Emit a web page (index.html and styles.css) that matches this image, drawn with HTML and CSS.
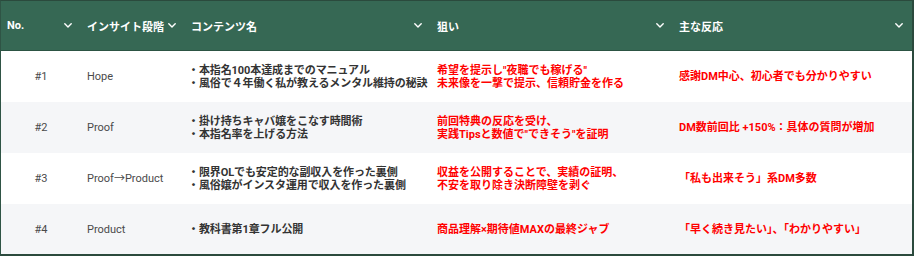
FILE: index.html
```html
<!DOCTYPE html>
<html lang="ja">
<head>
<meta charset="utf-8">
<link rel="stylesheet" href="styles.css">
</head>
<body>
<div class="table">
  <div class="row head">
    <div class="cell hcell"><span>No.</span><svg class="chev" viewBox="0 0 8 5" width="8" height="5"><polyline points="0.8,0.8 4,4 7.2,0.8"/></svg></div>
    <div class="cell hcell"><span>インサイト段階</span><svg class="chev" viewBox="0 0 8 5" width="8" height="5"><polyline points="0.8,0.8 4,4 7.2,0.8"/></svg></div>
    <div class="cell hcell"><span>コンテンツ名</span><svg class="chev" viewBox="0 0 8 5" width="8" height="5"><polyline points="0.8,0.8 4,4 7.2,0.8"/></svg></div>
    <div class="cell hcell"><span>狙い</span><svg class="chev" viewBox="0 0 8 5" width="8" height="5"><polyline points="0.8,0.8 4,4 7.2,0.8"/></svg></div>
    <div class="cell hcell"><span>主な反応</span><svg class="chev" viewBox="0 0 8 5" width="8" height="5"><polyline points="0.8,0.8 4,4 7.2,0.8"/></svg></div>
  </div>
  <div class="row body">
    <div class="cell num">#1</div>
    <div class="cell stage">Hope</div>
    <div class="cell content">・本指名100本達成までのマニュアル<br>・風俗で４年働く私が教えるメンタル維持の秘訣</div>
    <div class="cell red">希望を提示し"夜職でも稼げる"<br>未来像を一撃で提示、信頼貯金を作る</div>
    <div class="cell red">感謝DM中心、初心者でも分かりやすい</div>
  </div>
  <div class="row body alt">
    <div class="cell num">#2</div>
    <div class="cell stage">Proof</div>
    <div class="cell content">・掛け持ちキャバ嬢をこなす時間術<br>・本指名率を上げる方法</div>
    <div class="cell red">前回特典の反応を受け、<br>実践Tipsと数値で"できそう"を証明</div>
    <div class="cell red">DM数前回比 +150%：具体の質問が増加</div>
  </div>
  <div class="row body">
    <div class="cell num">#3</div>
    <div class="cell stage">Proof→Product</div>
    <div class="cell content">・限界OLでも安定的な副収入を作った裏側<br>・風俗嬢がインスタ運用で収入を作った裏側</div>
    <div class="cell red">収益を公開することで、実績の証明、<br>不安を取り除き決断障壁を剥ぐ</div>
    <div class="cell red">「私も出来そう」系DM多数</div>
  </div>
  <div class="row body alt last">
    <div class="cell num">#4</div>
    <div class="cell stage">Product</div>
    <div class="cell content">・教科書第1章フル公開</div>
    <div class="cell red">商品理解×期待値MAXの最終ジャブ</div>
    <div class="cell red">「早く続き見たい」、「わかりやすい」</div>
  </div>
</div>
</body>
</html>
```

FILE: styles.css
```css
html, body {
  margin: 0;
  padding: 0;
  background: #ffffff;
}

body {
  font-family: Roboto, "Noto Sans CJK JP", sans-serif;
  font-size: 11px;
}

.table {
  width: 914px;
  height: 256px;
  box-sizing: border-box;
  border-top: 1px solid #2b4a3d;
  border-left: 1px solid #2f5445;
  border-right: 2px solid #2b4a3d;
  border-bottom: 2px solid #2b4a3d;
  display: flex;
  flex-direction: column;
}

.row {
  display: grid;
  grid-template-columns: 80px 104px 246px 242px 239px;
}

.head {
  height: 50px;
  background: #366854;
  border-bottom: 1px solid #2c5343;
  box-sizing: border-box;
}

.hcell {
  display: flex;
  align-items: center;
  justify-content: space-between;
  padding: 0 9px 0 6px;
  color: #ffffff;
  font-weight: 700;
}

.chev {
  flex: none;
}

.chev polyline {
  fill: none;
  stroke: #ffffff;
  stroke-width: 1.4;
  stroke-linecap: round;
  stroke-linejoin: round;
}

.body {
  height: 51px;
  background: #ffffff;
}

.body.alt {
  background: #f5f6f8;
}

.body.last {
  height: 50px;
}

.cell {
  display: flex;
  align-items: center;
  min-width: 0;
}

.body .cell {
  padding: 0 6px;
  line-height: 13px;
  white-space: nowrap;
}

.num {
  justify-content: center;
  color: #4a4a4a;
}

.stage {
  color: #4a4a4a;
}

.body .content {
  padding-left: 3px;
  color: #333333;
  font-weight: 700;
  letter-spacing: -0.1px;
}

.red {
  color: #ff0000;
  font-weight: 700;
}
```
